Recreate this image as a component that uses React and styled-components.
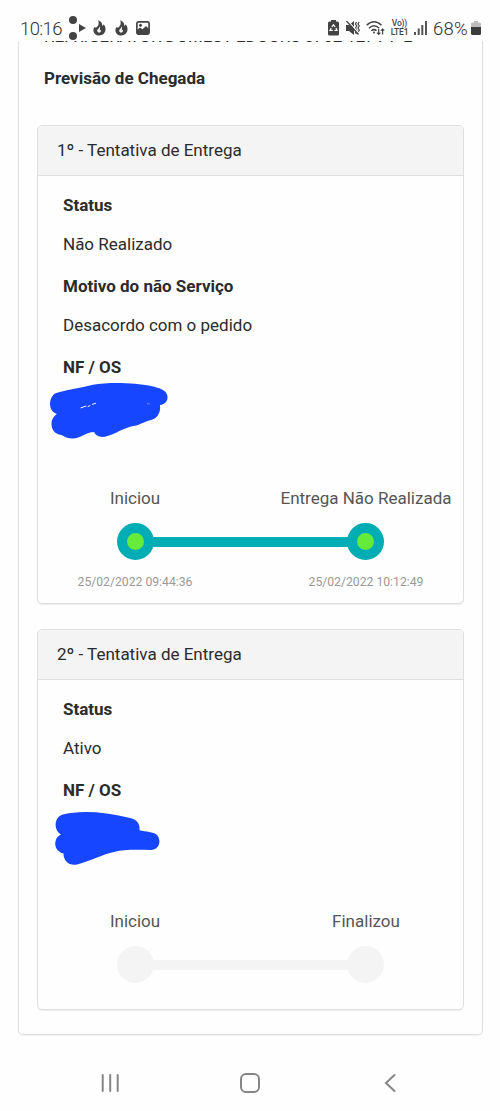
import React from "react";
import styled, { createGlobalStyle } from "styled-components";

const GlobalStyle = createGlobalStyle`
  * {
    box-sizing: border-box;
  }
  body {
    margin: 0;
    background-color: #fefefe;
    font-family: Roboto, "Liberation Sans", sans-serif;
    color: #2b2b2b;
  }
  svg {
    display: block;
    flex-shrink: 0;
  }
`;

const Screen = styled.div`
  width: 500px;
  height: 1111px;
  display: flex;
  flex-direction: column;
  overflow: hidden;
`;

const StatusBar = styled.header`
  height: 41px;
  padding: 15px 19px 0 20px;
  display: flex;
  align-items: flex-start;
  justify-content: space-between;
  flex-shrink: 0;
`;

const StatusGroup = styled.div`
  height: 26px;
  display: flex;
  align-items: center;
`;

const StatusItem = styled.div`
  margin-left: ${(props) => props.$gap}px;
`;

const StatusText = styled.span`
  display: block;
  width: ${(props) => props.$width}px;
  padding-top: 2px;
  font-size: 18.5px;
  font-weight: 300;
  line-height: 24px;
  letter-spacing: ${(props) => props.$spacing}px;
  color: #333;
  white-space: nowrap;
`;

const NetworkLabel = styled.div`
  width: 19px;
  display: flex;
  flex-direction: column;
  align-items: center;
  font-size: 8.5px;
  font-weight: 500;
  line-height: 9px;
  letter-spacing: -0.2px;
  white-space: nowrap;
  color: #444;
`;

const Content = styled.main`
  flex: 1;
  padding: 0 17px 0 18px;
  overflow: hidden;
`;

const OuterCard = styled.section`
  height: 994px;
  padding: 0 18px;
  display: flow-root;
  border: 1px solid #e0e0e0;
  border-top: none;
  border-radius: 0 0 5px 5px;
  box-shadow: 0 1px 1px rgba(0, 0, 0, 0.06);
`;

const ProductName = styled.p`
  height: 26px;
  margin: -18px 0 0 7px;
  font-size: 17px;
  line-height: 26px;
  letter-spacing: -0.1px;
  white-space: nowrap;
`;

const StyledHeader = styled.h2`
  margin: 17px 0 34px 7px;
  font-size: 17px;
  font-weight: 700;
  line-height: 25px;
  white-space: nowrap;
`;

const AttemptCard = styled.article`
  height: ${(props) => props.$height}px;
  margin-bottom: 25px;
  border: 1px solid #dfdfdf;
  border-radius: 5px;
  box-shadow: 0 1px 1px rgba(0, 0, 0, 0.07);
  overflow: hidden;
`;

const AttemptHeader = styled.div`
  height: 50px;
  padding-left: 19px;
  border-bottom: 1px solid #dfdfdf;
  background-color: #f4f4f4;
  font-size: 17px;
  line-height: 49px;
`;

const AttemptBody = styled.div`
  padding: 17px 0 0;
`;

const FieldTitle = styled.h3`
  margin: 0 0 15px 25px;
  font-size: 17px;
  font-weight: 700;
  line-height: 24px;
`;

const FieldValue = styled.p`
  margin: 0 0 18px 25px;
  font-size: 17px;
  line-height: 24px;
`;

const Scribble = styled.svg`
  margin: ${(props) => props.$before}px 0 ${(props) => props.$after}px 10px;
`;

const Timeline = styled.div`
  padding: 0 11px;
`;

const TimelineRow = styled.div`
  display: grid;
  grid-template-columns: 172px 172px;
  justify-content: space-between;
  text-align: center;
  white-space: nowrap;
`;

const StepLabel = styled.span`
  font-size: 17px;
  line-height: 24px;
  color: #555;
`;

const StepDate = styled.span`
  font-size: 12.2px;
  line-height: 18px;
  color: #999;
`;

const Track = styled.div`
  margin: 13px 0;
  padding: 0 68px;
  display: flex;
  align-items: center;
`;

const Dot = styled.div`
  width: 37px;
  height: 37px;
  border: 10px solid ${(props) => (props.$active ? "#00adb5" : "#f4f4f4")};
  border-radius: 50%;
  background-color: ${(props) => (props.$active ? "#66eb3a" : "#f4f4f4")};
`;

const Line = styled.div`
  flex: 1;
  height: 10px;
  margin: 0 -2px;
  background-color: ${(props) => (props.$active ? "#00adb5" : "#f4f4f4")};
`;

const NavBar = styled.nav`
  height: 57px;
  padding: 0 97px;
  display: flex;
  align-items: center;
  justify-content: space-between;
  flex-shrink: 0;
`;

const BubblesIcon = () => (
  <svg width="18" height="26" viewBox="0 0 18 26" fill="#444">
    <circle cx="4" cy="5" r="4" />
    <circle cx="4" cy="21" r="4" />
    <path d="M10 9v8l7-4z" />
  </svg>
);

const FlameIcon = () => (
  <svg width="13" height="16" viewBox="0 0 13 16">
    <path
      fill="#444"
      d="M5.200.3C8.200 1.500 9.500 3.500 9.300 6c.8-.3 1.200-.9 1.300-1.800C12 5.800 12.700 7.600 12.500 9.800 12.200 13.200 9.700 15.500 6.300 15.500 2.900 15.500.4 13.200.4 10.200.4 8.900.8 7.800 1.500 6.900c.5.500 1 .7 1.800.6C4.800 6.500 6.600 4.200 5.200.3z"
    />
    <path fill="#fefefe" d="M6.200 6.200c.5 2.300-2 2.700-2 4.600 0 1.400 1.400 2.100 2.600 1.600 1.200-.5 1.500-1.700 1.100-2.700-.3.600-.8.800-1.300.6C7.300 9 7.300 7.300 6.200 6.200z" />
  </svg>
);

const PictureIcon = () => (
  <svg width="14" height="14" viewBox="0 0 14 14">
    <rect x=".9" y=".9" width="12.200" height="12.200" rx="1.500" fill="none" stroke="#444" strokeWidth="1.700" />
    <circle cx="4.500" cy="4.300" r="1.500" fill="#444" />
    <path fill="#444" d="M1 9l3-2.500 2.500 1.700L10 5l3 3v5H1z" />
  </svg>
);

const RecycleIcon = () => (
  <svg width="11" height="16" viewBox="0 0 11 16">
    <path fill="#444" d="M3 0h5v1.500h1.500q1.500 0 1.500 1.500v11q0 1.500-1.500 1.500h-8Q0 15.500 0 14V3q0-1.500 1.500-1.500H3z" />
    <path
      fill="none"
      stroke="#fefefe"
      strokeWidth="1.200"
      d="M3.800 7L5.500 4.800 7.200 7M8 8l1 2.300H6.400M4.700 10.300H2L3.200 8"
    />
  </svg>
);

const MuteIcon = () => (
  <svg width="14" height="16" viewBox="0 0 14 16">
    <path fill="#444" d="M0 5h3l5-4v14l-5-4H0z" />
    <path fill="none" stroke="#444" strokeWidth="1.200" d="M10.500 2l-1 2 1.300 2-1.300 2 1.300 2.200-1.300 2 1 1.800M13 2l-1 2 1.300 2L12 8l1.300 2.200-1.300 2 1 1.800" />
    <path stroke="#fefefe" strokeWidth="1.200" d="M1.500.5l12 13.500" />
    <path stroke="#444" strokeWidth="1.200" d="M.5 1l12 13.500" />
  </svg>
);

const WifiIcon = () => (
  <svg width="19" height="16" viewBox="0 0 19 16" fill="none" stroke="#444" strokeWidth="1.500">
    <path d="M.7 5.300Q8 -1.700 15.500 5.300M3 8.200Q8 3.300 13.200 8.200M5.400 10.800Q8 8.500 10.500 10.600" />
    <circle cx="8" cy="12.500" r="1" fill="#444" stroke="none" />
    <path strokeWidth="1.200" d="M12.700 9v5.500M10.900 12.700l1.800 1.800 1.800-1.800M16.600 14.500V9M14.900 10.700L16.600 9l1.700 1.700" />
  </svg>
);

const SignalIcon = () => (
  <svg width="13" height="14" viewBox="0 0 13 14" fill="#555">
    <rect x="0" y="11" width="2" height="3" />
    <rect x="3.700" y="7.500" width="2" height="6.500" />
    <rect x="7.300" y="4" width="2" height="10" />
    <rect x="11" y="0" width="2" height="14" />
  </svg>
);

const BatteryIcon = () => (
  <svg width="10" height="16" viewBox="0 0 10 16">
    <path fill="#bdbdbd" d="M3 1h4v1.500h1.500Q10 2.500 10 4v3H0V4q0-1.500 1.500-1.500H3z" />
    <path fill="#3c3c3c" d="M0 7h10v6.500q0 1.500-1.500 1.500h-7Q0 15 0 13.500z" />
  </svg>
);

const FirstScribble = () => (
  <Scribble width="124" height="62" viewBox="0 0 124 62" $before={-13} $after={43}>
    <path
      fill="#1646ff"
      d="M10 11.500C20 8.500 32 7 45 3.800C60 1 86 1.500 103 5C112 7 119 9.500 119.500 15.500C119.800 20 117 23.500 112 24C113 32 109 37.500 103 39C95 41 91 44.500 85 45C75 47 68 53 57 55.800C51 56.500 48 54.500 46 51C38 51 32 58 24 57.600C17 57 15 54 11 53.500C6 52 3.500 48 3.500 43C3.500 38 6 35 9 33C4.500 31.500 2 28 2 22.500C2.500 16.500 5 12.500 10 11.500Z"
    />
    <path stroke="#fefefe" strokeWidth="1" strokeLinecap="round" fill="none" d="M33 26.800l5-1.700M40 25.500l2-.9M44.500 23.300l3-.9" />
    <path stroke="#fefefe" strokeWidth=".7" fill="none" d="M99 23q2-1 3 .2" opacity=".5" />
  </Scribble>
);

const SecondScribble = () => (
  <Scribble width="124" height="62" viewBox="0 0 124 62" $before={-7} $after={37}>
    <path
      fill="#1646ff"
      d="M14 4.700C32 0 57 2 80 7.500C88 9 92.500 13 91.500 20.300C98 22 105 21.500 109 25C114 31 111 40 103 40C91 40 77 39 66 42C55 44 43 51 29 54.500C21 56 15.500 51 15.500 43.500C5 41 5 28 13 24.500C5.500 20 6 7.500 14 4.700Z"
    />
  </Scribble>
);

const attempts = [
  {
    title: "1º - Tentativa de Entrega",
    height: 479,
    fields: [
      { title: "Status", value: "Não Realizado" },
      { title: "Motivo do não Serviço", value: "Desacordo com o pedido" },
    ],
    Mark: FirstScribble,
    active: true,
    steps: ["Iniciou", "Entrega Não Realizada"],
    dates: ["25/02/2022 09:44:36", "25/02/2022 10:12:49"],
  },
  {
    title: "2º - Tentativa de Entrega",
    height: 381,
    fields: [{ title: "Status", value: "Ativo" }],
    Mark: SecondScribble,
    active: false,
    steps: ["Iniciou", "Finalizou"],
    dates: [],
  },
];

const Attempt = ({ attempt }) => {
  const { title, height, fields, Mark, active, steps, dates } = attempt;

  return (
    <AttemptCard $height={height}>
      <AttemptHeader>{title}</AttemptHeader>
      <AttemptBody>
        {fields.map((field) => (
          <React.Fragment key={field.title}>
            <FieldTitle>{field.title}</FieldTitle>
            <FieldValue>{field.value}</FieldValue>
          </React.Fragment>
        ))}
        <FieldTitle>NF / OS</FieldTitle>
        <Mark />
        <Timeline>
          <TimelineRow>
            {steps.map((step) => (
              <StepLabel key={step}>{step}</StepLabel>
            ))}
          </TimelineRow>
          <Track>
            <Dot $active={active} />
            <Line $active={active} />
            <Dot $active={active} />
          </Track>
          <TimelineRow>
            {dates.map((date) => (
              <StepDate key={date}>{date}</StepDate>
            ))}
          </TimelineRow>
        </Timeline>
      </AttemptBody>
    </AttemptCard>
  );
};

const App = () => {
  return (
    <Screen>
      <GlobalStyle />
      <StatusBar>
        <StatusGroup>
          <StatusText $width={41} $spacing={-0.6}>10:16</StatusText>
          <StatusItem $gap={8}>
            <BubblesIcon />
          </StatusItem>
          <StatusItem $gap={6}>
            <FlameIcon />
          </StatusItem>
          <StatusItem $gap={9}>
            <FlameIcon />
          </StatusItem>
          <StatusItem $gap={8}>
            <PictureIcon />
          </StatusItem>
        </StatusGroup>
        <StatusGroup>
          <RecycleIcon />
          <StatusItem $gap={7}>
            <MuteIcon />
          </StatusItem>
          <StatusItem $gap={6}>
            <WifiIcon />
          </StatusItem>
          <StatusItem $gap={5}>
            <NetworkLabel>
              <span>Vo))</span>
              <span>LTE1</span>
            </NetworkLabel>
          </StatusItem>
          <StatusItem $gap={5}>
            <SignalIcon />
          </StatusItem>
          <StatusItem $gap={6}>
            <StatusText $width={38} $spacing={0.3}>68%</StatusText>
          </StatusItem>
          <BatteryIcon />
        </StatusGroup>
      </StatusBar>
      <Content>
        <OuterCard>
          <ProductName>REFRIGERATOR DOMEST 2DOORS 0702 127V F L</ProductName>
          <StyledHeader>Previsão de Chegada</StyledHeader>
          {attempts.map((attempt) => (
            <Attempt key={attempt.title} attempt={attempt} />
          ))}
        </OuterCard>
      </Content>
      <NavBar>
        <svg width="26" height="20" viewBox="0 0 26 20" stroke="#858585" strokeWidth="2" strokeLinecap="round">
          <path d="M5.700 2v16M13.200 2v16M20.700 2v16" />
        </svg>
        <svg width="20" height="20" viewBox="0 0 20 20" fill="none" stroke="#858585" strokeWidth="2">
          <rect x="1" y="1" width="18" height="18" rx="5" />
        </svg>
        <svg width="26" height="20" viewBox="0 0 26 20" fill="none" stroke="#858585" strokeWidth="2" strokeLinecap="round">
          <path d="M17.500 2L9 10l8.500 8" />
        </svg>
      </NavBar>
    </Screen>
  );
};

export default App;
